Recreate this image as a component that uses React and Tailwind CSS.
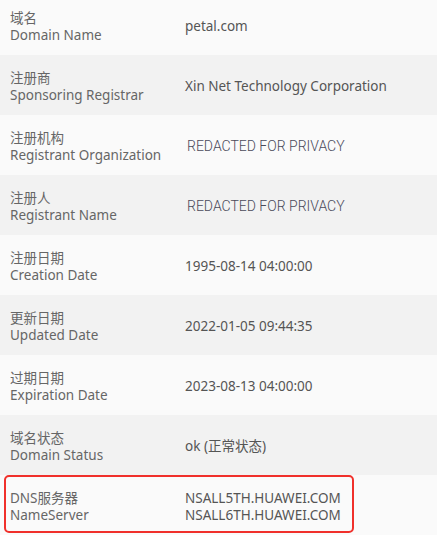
const rows = [
  { zh: "域名", en: "Domain Name", value: ["petal.com"] },
  { zh: "注册商", en: "Sponsoring Registrar", value: ["Xin Net Technology Corporation"] },
  { zh: "注册机构", en: "Registrant Organization", value: ["REDACTED FOR PRIVACY"], redacted: true },
  { zh: "注册人", en: "Registrant Name", value: ["REDACTED FOR PRIVACY"], redacted: true },
  { zh: "注册日期", en: "Creation Date", value: ["1995-08-14 04:00:00"] },
  { zh: "更新日期", en: "Updated Date", value: ["2022-01-05 09:44:35"] },
  { zh: "过期日期", en: "Expiration Date", value: ["2023-08-13 04:00:00"] },
  { zh: "域名状态", en: "Domain Status", value: ["ok (正常状态)"] },
  { zh: "DNS服务器", en: "NameServer", value: ["NSALL5TH.HUAWEI.COM", "NSALL6TH.HUAWEI.COM"], marked: true },
];

export default function App() {
  return (
    <div className="w-[437px] h-[540px] overflow-hidden bg-white font-['Noto_Sans','Noto_Sans_CJK_SC',sans-serif] text-[13.5px]">
      <div className="-mt-[5px]">
        {rows.map((row, i) => (
          <div
            key={row.en}
            className={`relative flex items-center h-[60px] pt-[3px] ${i % 2 === 0 ? "bg-[#fafafa]" : "bg-[#f2f2f2]"}`}
          >
            <div className="w-[185px] pl-[10px] leading-[17px] text-[#666]">
              <div>{row.zh}</div>
              <div>{row.en}</div>
            </div>
            <div
              className={`leading-[17px] ${row.redacted ? "font-['Roboto',sans-serif] text-[14px] font-light text-[#4a4a5a] pl-[2px]" : "text-[#555]"}`}
            >
              {row.value.map((v) => (
                <div key={v}>{v}</div>
              ))}
            </div>
            {row.marked && (
              <div className="absolute left-[4px] top-0 w-[350px] h-[58px] border-2 border-[#f0302b] rounded-[5px]" />
            )}
          </div>
        ))}
      </div>
    </div>
  );
}
